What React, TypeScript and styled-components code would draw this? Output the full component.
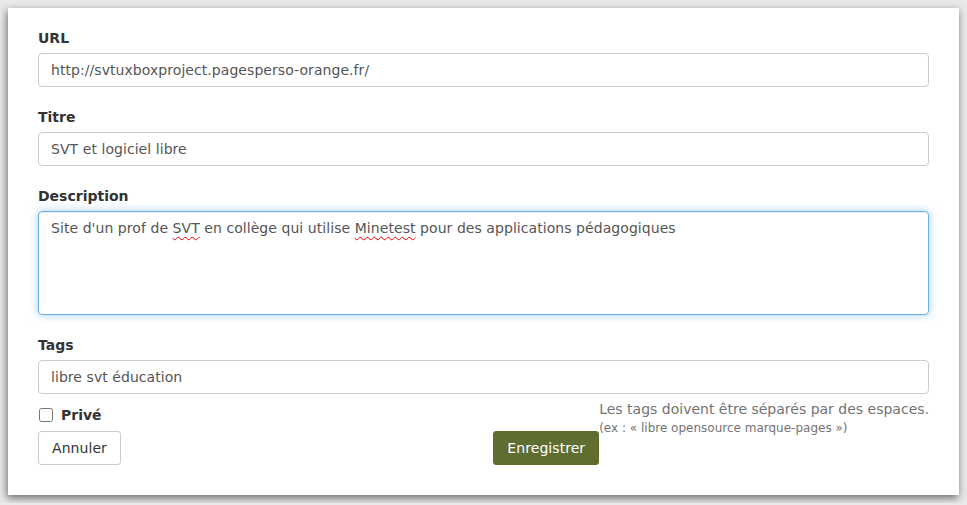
import styled, { createGlobalStyle } from "styled-components";

const GlobalStyle = createGlobalStyle`
  html, body {
    margin: 0;
    padding: 0;
    background: #e9e9e9;
    font-family: "DejaVu Sans", Verdana, sans-serif;
    font-size: 14px;
    color: #333;
  }
`;

const Page = styled.div`
  padding: 8px;
`;

const Card = styled.form`
  background: #fff;
  padding: 20px 30px 30px 30px;
  box-shadow: -1px 3px 8px rgba(0, 0, 0, 0.55);
`;

const Group = styled.div`
  margin-bottom: 20px;
`;

const Label = styled.label`
  display: block;
  font-weight: bold;
  line-height: 20px;
  margin-bottom: 5px;
`;

const Input = styled.input`
  display: block;
  box-sizing: border-box;
  width: 100%;
  height: 34px;
  padding: 6px 12px;
  border: 1px solid #ccc;
  border-radius: 4px;
  font: inherit;
  letter-spacing: 0.06px;
  color: #555;
  outline: none;
`;

const TextArea = styled.div`
  box-sizing: border-box;
  width: 100%;
  height: 104px;
  padding: 6px 12px;
  border: 1px solid #66afe9;
  border-radius: 4px;
  color: #555;
  letter-spacing: 0.06px;
  line-height: 20px;
  box-shadow: inset 0 1px 1px rgba(0, 0, 0, 0.075), 0 0 8px rgba(102, 175, 233, 0.6);
  outline: none;
`;

const Misspelled = styled.span`
  text-decoration: underline wavy #e00;
  text-decoration-thickness: 1px;
  text-underline-offset: 3px;
`;

const BottomRow = styled.div`
  display: flex;
  align-items: flex-start;
  margin-top: 5px;
`;

const LeftCol = styled.div`
  display: flex;
  flex-direction: column;
  align-items: flex-start;
  flex: 1;
`;

const CheckRow = styled.label`
  display: flex;
  align-items: center;
  gap: 8px;
  margin-top: 6px;
  line-height: 20px;
  font-weight: bold;
`;

const Box = styled.input`
  width: 14px;
  height: 14px;
  margin: 0 0 0 1px;
`;

const Button = styled.button<{ $primary?: boolean }>`
  box-sizing: border-box;
  height: 34px;
  padding: 6px 13px;
  font: inherit;
  letter-spacing: 0.06px;
  line-height: 20px;
  border-radius: 3px;
  border: 1px solid ${(p) => (p.$primary ? "#5c6a2c" : "#ccc")};
  background: ${(p) => (p.$primary ? "#5f6e30" : "#fff")};
  color: ${(p) => (p.$primary ? "#fff" : "#333")};
`;

const CancelButton = styled(Button)`
  margin-top: 6px;
`;

const SaveButton = styled(Button)`
  align-self: flex-end;
`;

const Help = styled.div`
  color: #737373;
  line-height: 20px;
`;

const HelpSmall = styled.div`
  font-size: 12px;
  line-height: 16px;
  margin-top: 1px;
`;

export default function App() {
  return (
    <Page>
      <GlobalStyle />
      <Card onSubmit={(e) => e.preventDefault()}>
        <Group>
          <Label>URL</Label>
          <Input defaultValue="http://svtuxboxproject.pagesperso-orange.fr/" />
        </Group>
        <Group>
          <Label>Titre</Label>
          <Input defaultValue="SVT et logiciel libre" />
        </Group>
        <Group>
          <Label>Description</Label>
          <TextArea role="textbox">
            Site d'un prof de <Misspelled>SVT</Misspelled> en collège qui utilise{" "}
            <Misspelled>Minetest</Misspelled> pour des applications pédagogiques
          </TextArea>
        </Group>
        <div>
          <Label>Tags</Label>
          <Input defaultValue="libre svt éducation" />
        </div>
        <BottomRow>
          <LeftCol>
            <CheckRow>
              <Box type="checkbox" />
              Privé
            </CheckRow>
            <CancelButton type="button">Annuler</CancelButton>
          </LeftCol>
          <SaveButton type="submit" $primary>
            Enregistrer
          </SaveButton>
          <Help>
            Les tags doivent être séparés par des espaces.
            <HelpSmall>(ex : « libre opensource marque-pages »)</HelpSmall>
          </Help>
        </BottomRow>
      </Card>
    </Page>
  );
}
